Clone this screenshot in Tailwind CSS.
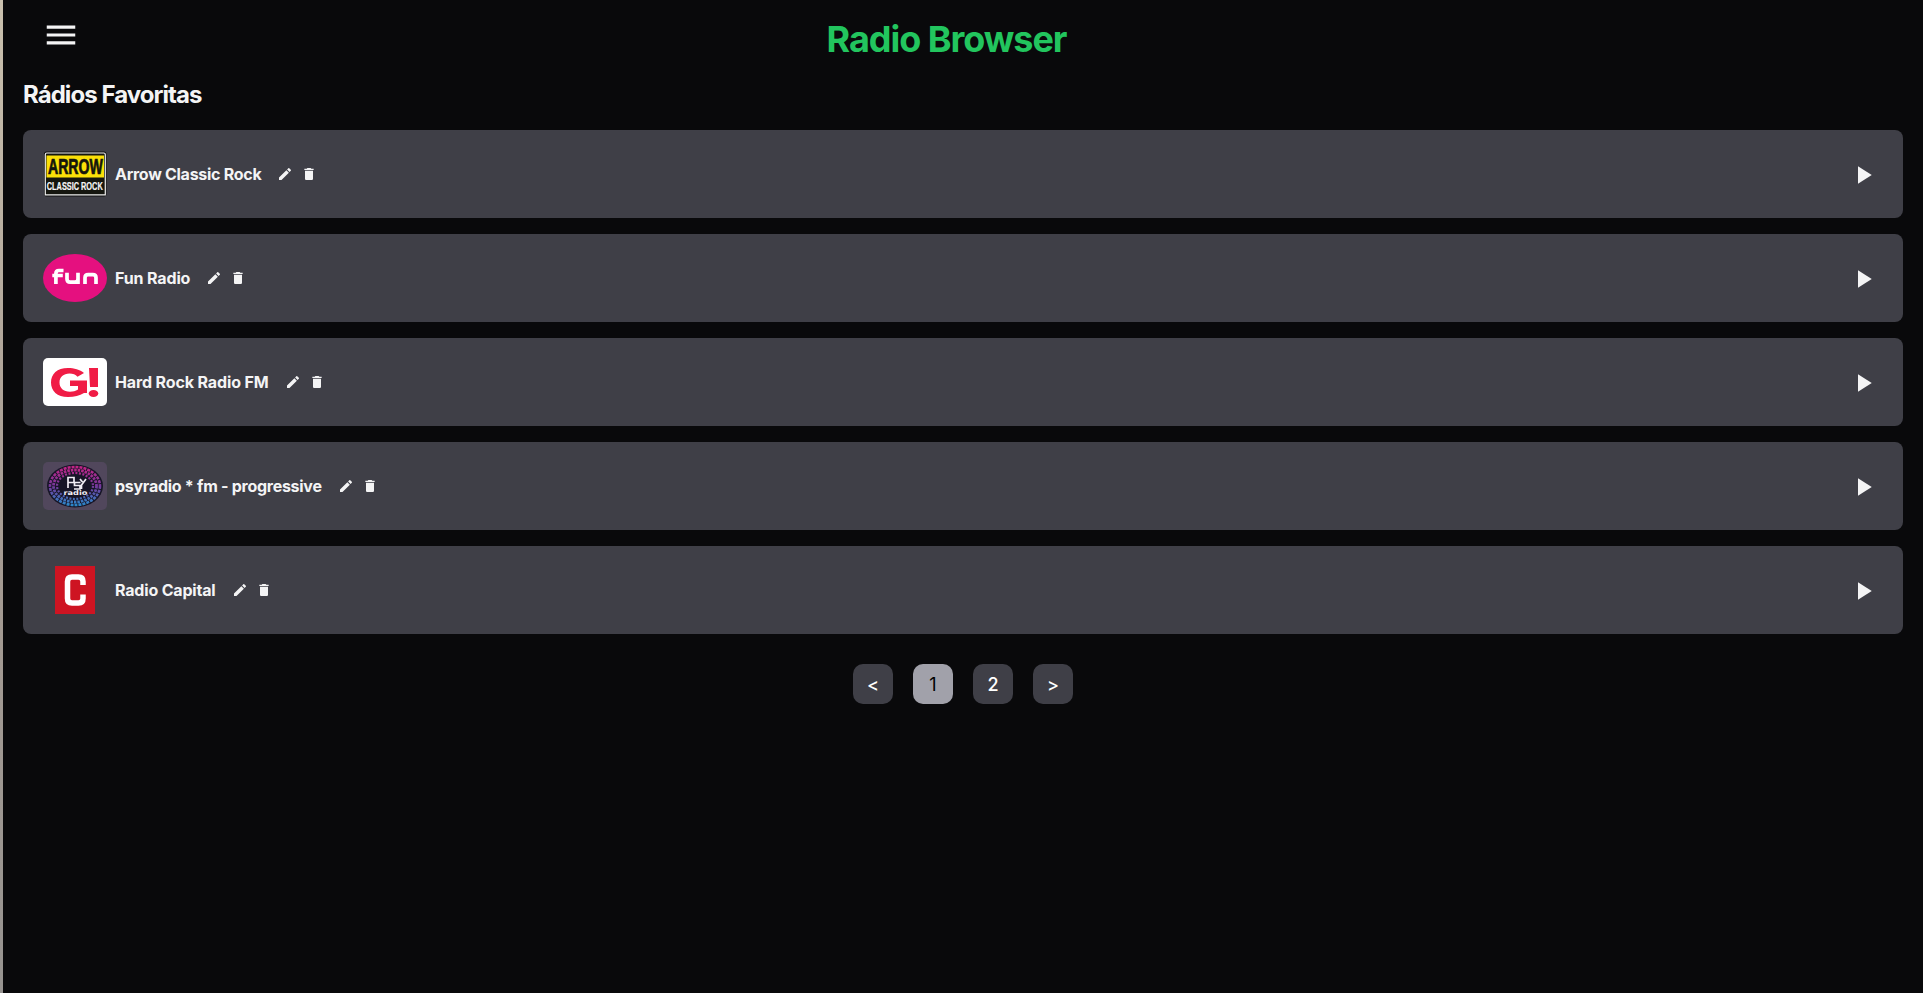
<!DOCTYPE html>
<html lang="pt">
<head>
<meta charset="utf-8">
<title>Radio Browser</title>
<script src="https://cdn.jsdelivr.net/npm/@tailwindcss/browser@4"></script>
</head>
<body class="bg-zinc-950 font-['Inter',sans-serif] text-zinc-100 antialiased">
<svg class="hidden">
  <symbol id="edit" viewBox="0 0 24 24"><path fill="currentColor" d="M3 17.25V21h3.75L17.81 9.94l-3.75-3.75L3 17.25zM20.71 7.04a1 1 0 0 0 0-1.41l-2.34-2.34a1 1 0 0 0-1.41 0l-1.83 1.83 3.75 3.75 1.83-1.83z"/></symbol>
  <symbol id="trash" viewBox="0 0 24 24"><path fill="currentColor" d="M6 19c0 1.100.9 2 2 2h8c1.100 0 2-.9 2-2V7H6v12zM19 4h-3.500l-1-1h-5l-1 1H5v2h14V4z"/></symbol>
  <symbol id="play" viewBox="0 0 24 24"><path fill="currentColor" d="M8 5v14l11-7z"/></symbol>
</svg>
<div class="flex h-screen overflow-hidden">
  <div class="w-[3px] shrink-0 bg-linear-to-b from-[#c9c0ae] via-[#a89d94] to-[#969390]"></div>
  <div class="flex grow flex-col px-5">
    <header class="flex h-[78px] items-start">
      <button class="mt-4 ml-[19px] size-[38px]"><svg class="size-[38px]" viewBox="0 0 24 24"><path fill="currentColor" d="M3 18h18v-2H3v2zm0-5h18v-2H3v2zm0-7v2h18V6H3z"/></svg></button>
      <h1 class="mt-[19px] mr-[90px] grow text-center text-4xl leading-10 font-bold tracking-[-1.05px] text-[#22c55e]">Radio Browser</h1>
    </header>
    <h2 class="h-[52px] text-2xl leading-[34px] font-bold tracking-[-0.95px]">Rádios Favoritas</h2>
    <main class="flex flex-col gap-4">
      <article class="flex h-[88px] items-center rounded-lg bg-zinc-700 p-5">
        <svg class="h-12 w-16" viewBox="0 0 64 48">
          <rect x="1" y="1.500" width="62.500" height="45" rx="2.500" fill="#111"/>
          <path d="M2.300 44.800V4.500q0-1.500 1.500-1.500h57q1.500 0 1.500 1.500v40.300z" fill="#15160f" stroke="#eee" stroke-width="1.200"/>
          <rect x="3.500" y="5.500" width="57.500" height="22" fill="#fbe008"/>
          <text transform="translate(5 24.200) scale(.83 1.250)" font-family="Liberation Sans Narrow, Liberation Sans" font-weight="700" font-size="17" fill="#15150c" stroke="#15150c" stroke-width=".6">ARROW</text>
          <text transform="translate(3.800 39.600) scale(.735 1)" font-family="Liberation Sans" font-weight="700" font-size="10" fill="#f5f5f5" stroke="#f5f5f5" stroke-width=".2">CLASSIC ROCK</text>
        </svg>
        <span class="ml-2 font-bold tracking-[-0.28px]">Arrow Classic Rock</span>
        <button class="ml-4"><svg class="size-4"><use href="#edit"/></svg></button>
        <button class="ml-2"><svg class="size-4"><use href="#trash"/></svg></button>
        <button class="mt-[2px] mr-[5px] ml-auto"><svg class="size-[30px]"><use href="#play"/></svg></button>
      </article>
      <article class="flex h-[88px] items-center rounded-lg bg-zinc-700 p-5">
        <svg class="h-12 w-16" viewBox="0 0 64 48">
          <ellipse cx="32" cy="24" rx="32" ry="24" fill="#e5107f"/>
          <path fill="none" stroke="#fff" stroke-width="3.700" stroke-linejoin="round" d="M12.900 30V19.500q0-3 3-3H20.500M9.300 21.500h10.500M24 18.800v6.200q0 3.200 3.200 3.200h4.600q3.200 0 3.200-3.200v-6.200M42 30v-6.200q0-3.200 3.200-3.200h4.600q3.200 0 3.200 3.200V30M35 24v6"/>
        </svg>
        <span class="ml-2 font-bold tracking-[-0.14px]">Fun Radio</span>
        <button class="ml-4"><svg class="size-4"><use href="#edit"/></svg></button>
        <button class="ml-2"><svg class="size-4"><use href="#trash"/></svg></button>
        <button class="mt-[2px] mr-[5px] ml-auto"><svg class="size-[30px]"><use href="#play"/></svg></button>
      </article>
      <article class="flex h-[88px] items-center rounded-lg bg-zinc-700 p-5">
        <svg class="h-12 w-16" viewBox="0 0 64 48">
          <rect width="64" height="48" rx="5" fill="#fff"/>
          <g fill="#f01c45"><path d="M41 15C37 11.500 31 10 25 10 14 10 8 16 8 24.500S14 39 25 39c6.500 0 11.500-1.300 16-4h3V22.500H27v5.500h8v3.500c-2.500 1.700-5 2.200-8 2.200-6.500 0-10.500-3.700-10.500-9.200s4-9 10-9c3.500 0 6 1 8 3.200zM46 10h9v19h-8z"/><ellipse cx="50.500" cy="35.500" rx="4.800" ry="3.500"/></g>
        </svg>
        <span class="ml-2 font-bold tracking-[-0.13px]">Hard Rock Radio FM</span>
        <button class="ml-4"><svg class="size-4"><use href="#edit"/></svg></button>
        <button class="ml-2"><svg class="size-4"><use href="#trash"/></svg></button>
        <button class="mt-[2px] mr-[5px] ml-auto"><svg class="size-[30px]"><use href="#play"/></svg></button>
      </article>
      <article class="flex h-[88px] items-center rounded-lg bg-zinc-700 p-5">
        <svg class="h-12 w-16" viewBox="0 0 64 48">
          <defs><linearGradient id="psy" x1="0" y1="0" x2="0" y2="48" gradientUnits="userSpaceOnUse"><stop offset=".1" stop-color="#c22486"/><stop offset=".5" stop-color="#76389c"/><stop offset=".9" stop-color="#2b87c8"/></linearGradient></defs>
          <rect width="64" height="48" rx="5" fill="#51475c"/>
          <ellipse cx="32" cy="24" rx="28" ry="21.500" fill="#171527"/>
          <g fill="none" stroke="url(#psy)"><ellipse cx="32" cy="24" rx="25" ry="19" stroke-width="2.600" stroke-dasharray="3 1"/><ellipse cx="32" cy="24" rx="21.500" ry="16" stroke-width="2.800" stroke-dasharray="2.500 1"/><ellipse cx="32" cy="24" rx="18" ry="13" stroke-width="2.200" stroke-dasharray="2 1.500"/></g>
          <g fill="none" stroke="#f1edf5" stroke-width="1.700"><path d="M25 26V15.500h6v5h-6M37.500 20.500H31.500v3h5.500v3.500h-6M37 17l2.500 3M43 17l-4.500 6v4"/></g>
          <text x="20.500" y="33" textLength="24" lengthAdjust="spacingAndGlyphs" font-family="DejaVu Sans" font-weight="700" font-size="6.500" fill="#f1edf5">radio</text>
        </svg>
        <span class="ml-2 font-bold tracking-[-0.27px]">psyradio * fm - progressive</span>
        <button class="ml-4"><svg class="size-4"><use href="#edit"/></svg></button>
        <button class="ml-2"><svg class="size-4"><use href="#trash"/></svg></button>
        <button class="mt-[2px] mr-[5px] ml-auto"><svg class="size-[30px]"><use href="#play"/></svg></button>
      </article>
      <article class="flex h-[88px] items-center rounded-lg bg-zinc-700 p-5">
        <svg class="h-12 w-16" viewBox="0 0 64 48">
          <rect x="12" width="40" height="48" fill="#ce1422"/>
          <path d="M40 19v-3.500q0-4.500-4.500-4.500h-6.500q-4.500 0-4.500 4.500v17q0 4.500 4.500 4.500h6.500q4.500 0 4.500-4.500V28.500" fill="none" stroke="#fff" stroke-width="5.500"/>
        </svg>
        <span class="ml-2 font-bold tracking-[-0.18px]">Radio Capital</span>
        <button class="ml-4"><svg class="size-4"><use href="#edit"/></svg></button>
        <button class="ml-2"><svg class="size-4"><use href="#trash"/></svg></button>
        <button class="mt-[2px] mr-[5px] ml-auto"><svg class="size-[30px]"><use href="#play"/></svg></button>
      </article>
    </main>
    <nav class="mt-[30px] flex justify-center gap-5 text-lg font-medium text-white">
      <button class="size-10 rounded-[10px] bg-zinc-700 pt-0.5">&lt;</button>
      <button class="size-10 rounded-[10px] bg-[#a1a1aa] pt-0.5 font-normal text-black">1</button>
      <button class="size-10 rounded-[10px] bg-zinc-700 pt-0.5">2</button>
      <button class="size-10 rounded-[10px] bg-zinc-700 pt-0.5">&gt;</button>
    </nav>
  </div>
</div>
</body>
</html>
